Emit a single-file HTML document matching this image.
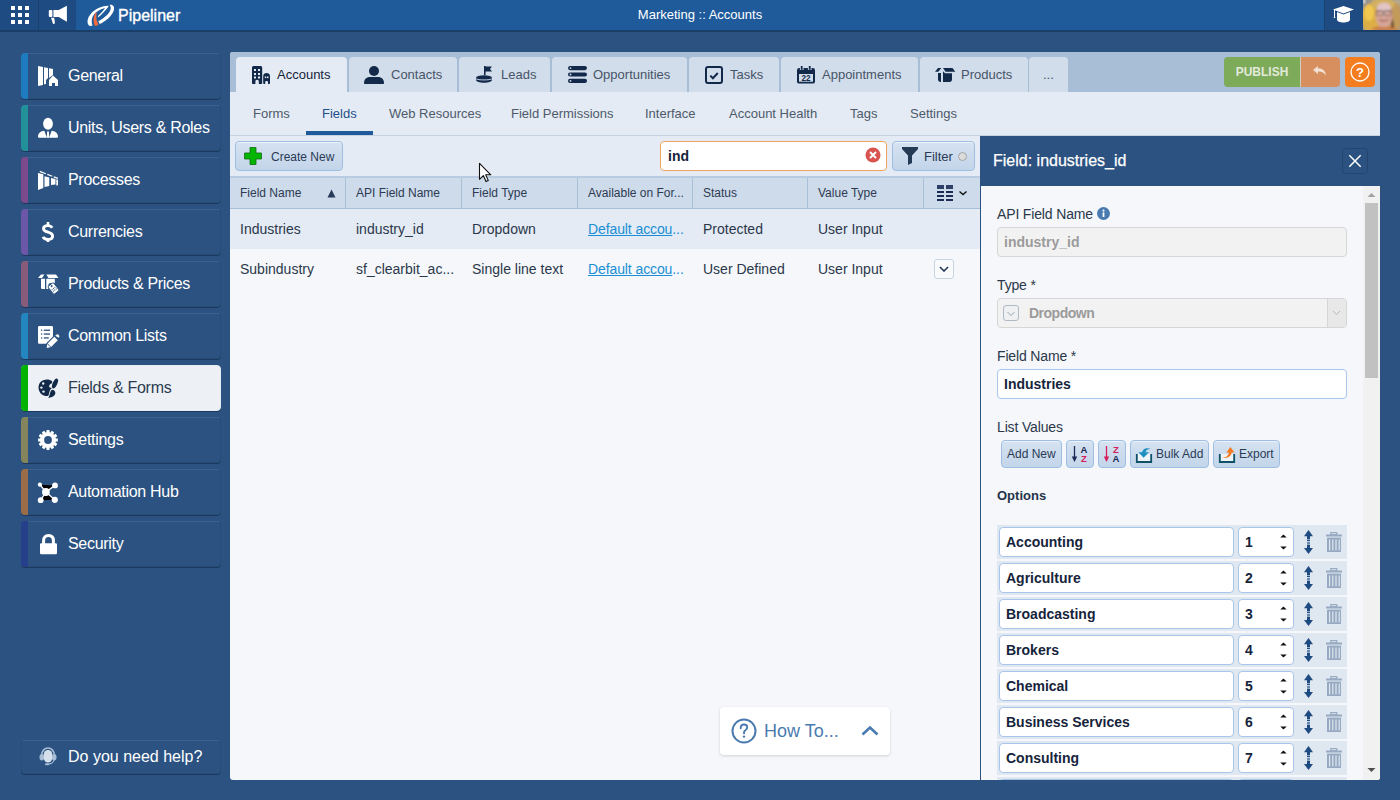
<!DOCTYPE html>
<html><head><meta charset="utf-8"><title>Pipeliner</title>
<style>
*{box-sizing:border-box;margin:0;padding:0}
html,body{width:1400px;height:800px;overflow:hidden;background:#2b5281;font-family:"Liberation Sans",sans-serif;position:relative}
.abs{position:absolute}
.si{position:absolute;left:21px;width:200px;height:46px;background:#2b5281;border-radius:4px;border:1px solid #2a4d78;border-top-color:#3a6190;box-shadow:0 1px 0 #1b395e}
.si .st{position:absolute;left:-1px;top:-1px;bottom:-1px;width:7px;border-radius:4px 0 0 4px}
.si .tx{position:absolute;left:46px;top:0;line-height:44px;color:#fff;font-size:16px;letter-spacing:-0.3px;white-space:nowrap}
.si .ic{position:absolute;left:16px;top:12px;width:20px;height:20px;overflow:visible}
.si.act{background:#edf1f6;border-color:#e6ebf2;box-shadow:0 1px 0 #1b395e}
.si.act .tx{color:#2c3b50}
.btn{position:absolute;background:linear-gradient(#d5e2f1,#c3d5ea);border:1px solid #9dbde2;border-radius:4px;box-shadow:inset 0 1px 0 #eef4fb}
.t13{font-size:13px}
</style></head>
<body>
<div class="abs" style="left:0px;top:0px;width:1400px;height:30px;background:#1f5a9b"></div>
<div class="abs" style="left:0px;top:0px;width:38px;height:30px;background:#1e4b81"></div>
<div class="abs" style="left:38px;top:0px;width:38px;height:30px;background:#1e4b81;border-left:1px solid #1a416f"></div>
<div class="abs" style="left:0px;top:30px;width:1400px;height:2px;background:#1b3e69"></div>
<div class="abs" style="left:0px;top:0px;white-space:nowrap;width:1400px;text-align:center;line-height:29px;font-size:13px;color:#fff">Marketing :: Accounts</div>
<svg class="abs" style="left:10px;top:6px" width="19" height="19" viewBox="0 0 19 19"><g fill="#fff"><rect x="1" y="0" width="4" height="4"/><rect x="8" y="0" width="4" height="4"/><rect x="15" y="0" width="4" height="4"/><rect x="1" y="7" width="4" height="4"/><rect x="8" y="7" width="4" height="4"/><rect x="15" y="7" width="4" height="4"/><rect x="1" y="14" width="4" height="4"/><rect x="8" y="14" width="4" height="4"/><rect x="15" y="14" width="4" height="4"/></g></svg>
<svg class="abs" style="left:48px;top:5px" width="20" height="20" viewBox="0 0 20 20"><rect x="0.8" y="5.1" width="3.6" height="6.8" rx="1" fill="#fff"/><path d="M5.4 5.1 H10.7 L18.9 0.8 V16.7 L10.7 11.9 H5.4Z" fill="#fff"/><path d="M3 12.8 H6.3 L6.9 17.8 C6.9 19 5.4 19.4 4.9 18.4Z" fill="#fff"/></svg>
<svg class="abs" style="left:84px;top:2px" width="34" height="26" viewBox="0 0 34 26"><path d="M5.5 23.8 C2.5 22 2.8 16 7.5 11 C11.5 7 17 4.3 23.5 3.8 C24.5 3.8 24.8 4.5 24 5.2 C21 9 17.5 12.8 14.3 15.2 L13.8 14.3 C16.5 11.8 19 9 21 6 C16.5 7 12.5 9.5 10 12.5 C7.5 15.5 7 19.5 8.5 23.5 C7.5 24 6.5 24.2 5.5 23.8Z" fill="#fff"/><path d="M25.5 2.8 C29 2.2 31 4.5 29.8 8.5 C28 14 21.5 19.5 15.8 22 L14.3 19.3 C19.5 16.5 24.5 12.5 26.2 8.5 C27.2 6 26.8 4.2 25.5 2.8Z" fill="#fff"/><path d="M12 10.3 C9.5 14 8.8 19.5 10.8 23.8 C12.2 23.8 13.5 23.3 14.6 22.5 C12.5 19.5 11.8 15 12.6 10.5Z" fill="#f26b3a"/></svg>
<div class="abs" style="left:118px;top:1px;white-space:nowrap;line-height:30px;font-size:16px;color:#fff;-webkit-text-stroke:0.35px #fff">Pipeliner</div>
<div class="abs" style="left:1324px;top:0px;width:39px;height:30px;background:#1e4b81;border-left:1px solid #1a416f"></div>
<svg class="abs" style="left:1333px;top:6px" width="22" height="17" viewBox="0 0 22 17"><path d="M0 3.5 L10.5 0 L21 3.5 L10.5 7.5Z" fill="#fff"/><path d="M4 6 V13.5 C4 15.5 7 16.5 10.5 16.5 C14 16.5 17 15.5 17 13.5 V6 L10.5 8.5Z" fill="#fff"/><path d="M1.5 4 V11" stroke="#fff" stroke-width="1"/><path d="M0.5 11 H2.5 L2 12 H1Z" fill="#fff"/></svg>
<svg class="abs" style="left:1363px;top:0px" width="37" height="30" viewBox="0 0 37 30"><defs><filter id="bl" x="-10%" y="-10%" width="120%" height="120%"><feGaussianBlur stdDeviation="1.1"/></filter><clipPath id="cp"><rect width="37" height="30"/></clipPath></defs><g clip-path="url(#cp)"><rect width="37" height="30" fill="#a59a8a"/><g filter="url(#bl)"><rect x="0" y="0" width="8" height="12" fill="#8f9092"/><rect x="0" y="0" width="2" height="3" fill="#f0f0f0"/><rect x="30" y="0" width="7" height="10" fill="#b8ab90"/><ellipse cx="8" cy="18" rx="9.5" ry="15" fill="#dcae45"/><ellipse cx="6" cy="13" rx="5" ry="8" fill="#f0c850"/><ellipse cx="31" cy="17" rx="8" ry="15" fill="#c29a5a"/><ellipse cx="20" cy="4" rx="12" ry="6" fill="#d2b060"/><path d="M26 14 C29 18 29 25 27 30 H31 C31 24 30 17 27 13Z" fill="#5a4232"/><ellipse cx="21" cy="15.5" rx="8.5" ry="12.5" fill="#d6a597"/><ellipse cx="21" cy="8" rx="7" ry="5.5" fill="#e2c4c4"/><path d="M13 11.2 H29" stroke="#6a5550" stroke-width="0.9"/><rect x="13" y="11" width="7" height="4.5" rx="1.5" fill="none" stroke="#6a5550" stroke-width="0.8"/><rect x="21.5" y="11" width="7" height="4.5" rx="1.5" fill="none" stroke="#6a5550" stroke-width="0.8"/><path d="M16.5 19.8 C19 21 23 21 25.5 19.5" stroke="#9a5a52" stroke-width="1.4" fill="none"/><path d="M8 30 C10 27 14 26.5 17 27 H26 C30 27 33 28 35 30Z" fill="#cf7a42"/></g></g></svg>
<div class="si" style="top:53px"><div class="st" style="background:#1f7bc0"></div><svg class="ic" viewBox="0 0 20 20"><path d="M0 0 L5 1 V19 L0 20Z M6 1.2 L10 2 V12 L8 14 V18 L6 18.3Z M11 2.2 L15 3 V9 L11 12Z" fill="#fff"/><path d="M15 9.5 L20 14 V20 H17 V17 H14 V20 H11 V14Z" fill="#fff"/></svg><div class="tx">General</div></div>
<div class="si" style="top:105px"><div class="st" style="background:#23919a"></div><svg class="ic" viewBox="0 0 20 20"><ellipse cx="10" cy="5.8" rx="4.9" ry="6" fill="#fff"/><path d="M0 18.8 C0 15 3 13.2 6.3 12.8 L9 19.8 H1.5 C0.6 19.8 0 19.5 0 18.8Z M20 18.8 C20 15 17 13.2 13.7 12.8 L11 19.8 H18.5 C19.4 19.8 20 19.5 20 18.8Z" fill="#fff"/><path d="M9.1 13.5 H10.9 L11.2 19.8 H8.8Z" fill="#fff"/></svg><div class="tx">Units, Users &amp; Roles</div></div>
<div class="si" style="top:157px"><div class="st" style="background:#7a4a8c"></div><svg class="ic" viewBox="0 0 20 20"><path d="M0 3 L5.3 4.2 V18 L0 20Z M6.5 6.2 L11.3 7.5 V16 L6.5 17Z M13 8 L17.5 9 V14.5 L13 15Z M18.3 9.3 L20 9.8 V15.2 L18.3 15.5Z M2 0.8 L8 3.2 L7.6 4.3 L1.6 1.9Z M9.5 3.8 L14.5 5.7 L14.1 6.8 L9.1 4.9Z M16 6.3 L20 7.8 L19.6 8.9 L15.6 7.4Z" fill="#fff"/></svg><div class="tx">Processes</div></div>
<div class="si" style="top:209px"><div class="st" style="background:#6b56a8"></div><svg class="ic" viewBox="0 0 20 20"><path d="M14.2 5.8 C13.3 4.3 11.8 3.6 9.7 3.6 C7.2 3.6 5.5 4.9 5.5 6.8 C5.5 8.8 7.5 9.5 10 10.2 C12.6 10.9 14.6 11.8 14.6 14.2 C14.6 16.3 12.6 17.4 10 17.4 C7.6 17.4 5.8 16.4 5 14.8" stroke="#fff" stroke-width="2.9" fill="none"/><rect x="8.7" y="0" width="2.6" height="3.5" fill="#fff"/><rect x="8.7" y="16.5" width="2.6" height="3.5" fill="#fff"/></svg><div class="tx">Currencies</div></div>
<div class="si" style="top:261px"><div class="st" style="background:#895b7b"></div><svg class="ic" viewBox="0 0 20 20"><path d="M0 4 L3 0.5 H6.5 L4 4Z M8.3 0.5 H18 L20.5 4 H10.5Z M3 4.8 H7 V15 H4.5 C3.5 15 3 14.5 3 13.5Z M8.3 4.8 H16.8 V9 H12.5 C11.2 9 10.3 10 10.3 11.3 V15 H8.3Z" fill="#fff"/><g transform="rotate(-38 15.5 14.5)"><rect x="12" y="9.5" width="7" height="10" rx="1.3" fill="#fff" stroke="#2b5281" stroke-width="0.9"/><circle cx="15.5" cy="11.5" r="1" fill="#2b5281"/><g fill="#2b5281"><rect x="13.2" y="14" width="1" height="1"/><rect x="15" y="14" width="1" height="1"/><rect x="16.8" y="14" width="1" height="1"/><rect x="13.2" y="16" width="1" height="1"/><rect x="15" y="16" width="1" height="1"/><rect x="16.8" y="16" width="1" height="1"/></g></g></svg><div class="tx">Products &amp; Prices</div></div>
<div class="si" style="top:313px"><div class="st" style="background:#2486bf"></div><svg class="ic" viewBox="0 0 20 20"><path d="M0 1.5 C0 0.5 0.5 0 1.5 0 H13.5 C14.5 0 15 0.5 15 1.5 V10.5 L8.5 17 L8.2 17.8 H1.5 C0.5 17.8 0 17.3 0 16.3Z" fill="#fff"/><g fill="#2b5281"><rect x="3" y="3.6" width="1.2" height="1.3"/><rect x="5.8" y="3.6" width="6.2" height="1.3"/><rect x="3" y="7.4" width="1.2" height="1.3"/><rect x="5.8" y="7.4" width="6.2" height="1.3"/><rect x="3" y="11.3" width="1.2" height="1.3"/><rect x="5.8" y="11.3" width="5" height="1.3"/></g><path d="M9.6 17.4 L16.3 10.7 L19.8 14.2 L13.1 20.9Z" fill="#fff"/><path d="M17.2 9.8 L18.1 8.9 C18.9 8.1 20 8.1 20.8 8.9 C21.6 9.7 21.6 10.8 20.8 11.6 L20.7 11.7Z" fill="#fff"/><path d="M9.2 18 L12.5 21.3 L8.7 21.9Z" fill="#fff"/></svg><div class="tx">Common Lists</div></div>
<div class="si act" style="top:365px"><div class="st" style="background:#00b300"></div><svg class="ic" viewBox="0 0 20 20"><path d="M14 3 C11 0.5 5 0.8 2 4.5 C-0.5 8 0.3 14 4 16.5 C6 18 8.5 18.5 10.5 17.5 L11.5 13.5 C12 12 12.8 11 14 10 L11.8 9.5 C10.5 8.5 11.2 6 14.3 5.3Z" fill="#13294a"/><circle cx="5.2" cy="5.5" r="1.2" fill="#edf1f6"/><circle cx="3.4" cy="9.6" r="1.2" fill="#edf1f6"/><circle cx="5.5" cy="13.6" r="1.2" fill="#edf1f6"/><ellipse cx="17" cy="5.5" rx="2.2" ry="5.3" transform="rotate(25 17 5.5)" fill="#13294a"/><path d="M14.5 11.8 C16.8 12.2 18 14.5 17 16.5 C15.8 18.8 12.5 19.5 10.2 20 C11.5 18 11.8 15.8 12.3 14.3 C12.8 12.8 13.5 12 14.5 11.8Z" fill="#13294a"/></svg><div class="tx">Fields &amp; Forms</div></div>
<div class="si" style="top:417px"><div class="st" style="background:#85855d"></div><svg class="ic" viewBox="0 0 20 20"><path d="M17.85 8.47 L19.89 8.52 L19.89 11.48 L17.85 11.53 L17.56 12.60 L19.30 13.67 L17.83 16.23 L16.04 15.25 L15.25 16.04 L16.23 17.83 L13.67 19.30 L12.60 17.56 L11.53 17.85 L11.48 19.89 L8.52 19.89 L8.47 17.85 L7.40 17.56 L6.33 19.30 L3.77 17.83 L4.75 16.04 L3.96 15.25 L2.17 16.23 L0.70 13.67 L2.44 12.60 L2.15 11.53 L0.11 11.48 L0.11 8.52 L2.15 8.47 L2.44 7.40 L0.70 6.33 L2.17 3.77 L3.96 4.75 L4.75 3.96 L3.77 2.17 L6.33 0.70 L7.40 2.44 L8.47 2.15 L8.52 0.11 L11.48 0.11 L11.53 2.15 L12.60 2.44 L13.67 0.70 L16.23 2.17 L15.25 3.96 L16.04 4.75 L17.83 3.77 L19.30 6.33 L17.56 7.40Z" fill="#fff"/><circle cx="10" cy="10" r="3.9" fill="#2b5281"/></svg><div class="tx">Settings</div></div>
<div class="si" style="top:469px"><div class="st" style="background:#9a6c48"></div><svg class="ic" viewBox="0 0 20 20"><g stroke="#fff" stroke-width="1.3"><path d="M1.9 2.7 L7.9 10 L17 3.4 M2.7 18.2 L7.9 10 L16.8 17.8"/></g><circle cx="7.9" cy="10" r="3.9" fill="#fff"/><circle cx="1.9" cy="2.7" r="2.1" fill="#fff"/><circle cx="17" cy="3.4" r="2.9" fill="#fff"/><circle cx="2.7" cy="18.2" r="2.9" fill="#fff"/><circle cx="16.8" cy="17.8" r="3.1" fill="#fff"/></svg><div class="tx">Automation Hub</div></div>
<div class="si" style="top:521px"><div class="st" style="background:#263f8a"></div><svg class="ic" viewBox="0 0 20 20"><path d="M5.6 10 V6.5 C5.6 3.2 7.6 1.5 10.5 1.5 C13.4 1.5 15.4 3.2 15.4 6.5 V10" stroke="#fff" stroke-width="3" fill="none"/><rect x="2" y="9.3" width="17" height="11" rx="1.2" fill="#fff"/></svg><div class="tx">Security</div></div>
<div class="si" style="top:740px;height:34px"><svg class="ic" style="top:5px" viewBox="0 0 20 20"><path d="M3.5 10 C3.5 5 6.5 2 10 2 C13.5 2 16.5 5 16.5 10" stroke="#a9bdd6" stroke-width="1.6" fill="none"/><ellipse cx="3.8" cy="11.3" rx="2.3" ry="3.3" fill="#a9bdd6"/><ellipse cx="16.2" cy="11.3" rx="2.3" ry="3.3" fill="#a9bdd6"/><rect x="5.8" y="4" width="8.4" height="12.5" rx="4.2" fill="#d6e0ec"/><path d="M16 14 C15.5 16.5 13 18 9.5 18.3" stroke="#a9bdd6" stroke-width="1.2" fill="none"/><rect x="7" y="17.3" width="4" height="2" rx="1" fill="#a9bdd6"/></svg><div class="tx" style="line-height:32px;letter-spacing:0">Do you need help?</div></div>
<div class="abs" style="left:230px;top:52px;width:1150px;height:728px;background:#f5f7fa;border-radius:3px"></div>
<div class="abs" style="left:230px;top:52px;width:1150px;height:40px;background:#a8bed7;border-radius:3px 3px 0 0"></div>
<div class="abs" style="left:236px;top:57px;width:111px;height:35px;background:#e4ebf4;border-radius:4px 4px 0 0"></div>
<svg class="abs" style="left:252px;top:66px" width="19" height="18" viewBox="0 0 19 18"><path d="M0 1.8 C0 0.6 0.6 0 1.8 0 H8.4 C9.6 0 10.2 0.6 10.2 1.8 V17 C10.2 17.6 9.8 18 9.2 18 H6.8 V15.5 C6.8 14.5 6.2 13.8 5.1 13.8 C4 13.8 3.4 14.5 3.4 15.5 V18 H1 C0.4 18 0 17.6 0 17Z" fill="#13294a"/><g fill="#e4ebf4"><rect x="2" y="3" width="2" height="2"/><rect x="6" y="3" width="2" height="2"/><rect x="2" y="7" width="2" height="2"/><rect x="6" y="7" width="2" height="2"/><rect x="2" y="10.5" width="2" height="2"/><rect x="6" y="10.5" width="2" height="2"/></g><path d="M11.2 10 C11.2 8 12.8 7 14.6 7 C16.4 7 18 8 18 10 V17.2 C18 17.7 17.7 18 17.2 18 H16 V16.3 C16 15.5 15.4 15 14.6 15 C13.8 15 13.2 15.5 13.2 16.3 V18 H12 C11.5 18 11.2 17.7 11.2 17.2Z" fill="#13294a"/><rect x="12.8" y="10.5" width="1.5" height="1.6" fill="#e4ebf4"/><rect x="15" y="10.5" width="1.5" height="1.6" fill="#e4ebf4"/></svg>
<div class="abs" style="left:277px;top:57px;white-space:nowrap;line-height:35px;font-size:13px;color:#16243b">Accounts</div>
<div class="abs" style="left:349px;top:57px;width:108px;height:35px;background:#d1ddeb;border-radius:4px 4px 0 0"></div>
<svg class="abs" style="left:364px;top:66px" width="20" height="18" viewBox="0 0 20 18"><circle cx="10" cy="5" r="5" fill="#13294a"/><path d="M0 17 C0 12.5 3.5 11 6 11 H14 C16.5 11 20 12.5 20 17 C20 17.6 19.6 18 19 18 H1 C0.4 18 0 17.6 0 17Z" fill="#13294a"/></svg>
<div class="abs" style="left:391px;top:57px;white-space:nowrap;line-height:35px;font-size:13px;color:#485467">Contacts</div>
<div class="abs" style="left:459px;top:57px;width:91px;height:35px;background:#d1ddeb;border-radius:4px 4px 0 0"></div>
<svg class="abs" style="left:476px;top:66px" width="17" height="17" viewBox="0 0 17 17"><path d="M8 0 L8.8 0 V9" stroke="#13294a" stroke-width="1.6"/><path d="M8.5 0.5 H16 L14 3 L16 5.5 H8.5Z" fill="#13294a"/><ellipse cx="8" cy="12" rx="8" ry="2.7" fill="#13294a"/><path d="M0 12 V14 C0 15.5 3.5 16.7 8 16.7 C12.5 16.7 16 15.5 16 14 V12" fill="#13294a"/><path d="M0 12.8 C2 14.3 14 14.3 16 12.8" stroke="#d1ddeb" stroke-width="0.9" fill="none"/></svg>
<div class="abs" style="left:501px;top:57px;white-space:nowrap;line-height:35px;font-size:13px;color:#485467">Leads</div>
<div class="abs" style="left:552px;top:57px;width:135px;height:35px;background:#d1ddeb;border-radius:4px 4px 0 0"></div>
<svg class="abs" style="left:568px;top:66px" width="19" height="17" viewBox="0 0 19 17"><rect x="0" y="0" width="19" height="4.2" rx="2.1" fill="#13294a"/><rect x="0" y="6.4" width="19" height="4.2" rx="2.1" fill="#13294a"/><rect x="0" y="12.8" width="19" height="4.2" rx="2.1" fill="#13294a"/><circle cx="2.5" cy="2.1" r="0.9" fill="#d1ddeb"/><circle cx="2.5" cy="8.5" r="0.9" fill="#d1ddeb"/><circle cx="2.5" cy="14.9" r="0.9" fill="#d1ddeb"/></svg>
<div class="abs" style="left:593px;top:57px;white-space:nowrap;line-height:35px;font-size:13px;color:#485467">Opportunities</div>
<div class="abs" style="left:689px;top:57px;width:90px;height:35px;background:#d1ddeb;border-radius:4px 4px 0 0"></div>
<svg class="abs" style="left:705px;top:66px" width="18" height="18" viewBox="0 0 18 18"><rect x="1" y="1" width="16" height="16" rx="2" fill="none" stroke="#13294a" stroke-width="2"/><path d="M5.3 9.6 L7.9 12.2 L12.8 7" fill="none" stroke="#13294a" stroke-width="2"/></svg>
<div class="abs" style="left:730px;top:57px;white-space:nowrap;line-height:35px;font-size:13px;color:#485467">Tasks</div>
<div class="abs" style="left:781px;top:57px;width:137px;height:35px;background:#d1ddeb;border-radius:4px 4px 0 0"></div>
<svg class="abs" style="left:797px;top:66px" width="18" height="18" viewBox="0 0 18 18"><rect x="0" y="2" width="18" height="15.6" rx="2.2" fill="#13294a"/><rect x="2" y="8" width="14" height="7.7" fill="#d1ddeb"/><rect x="2.9" y="0" width="3.6" height="4" fill="#d1ddeb"/><rect x="10.9" y="0" width="3.6" height="4" fill="#d1ddeb"/><rect x="3.8" y="0" width="1.8" height="3.8" fill="#13294a"/><rect x="11.8" y="0" width="1.8" height="3.8" fill="#13294a"/><text x="9" y="14.9" text-anchor="middle" font-family="Liberation Sans" font-weight="bold" font-size="8.2" fill="#13294a">22</text></svg>
<div class="abs" style="left:822px;top:57px;white-space:nowrap;line-height:35px;font-size:13px;color:#485467">Appointments</div>
<div class="abs" style="left:920px;top:57px;width:108px;height:35px;background:#d1ddeb;border-radius:4px 4px 0 0"></div>
<svg class="abs" style="left:935px;top:66px" width="21" height="18" viewBox="0 0 21 18"><g transform="translate(0,2)"><path d="M0 3.7 L3 0 H6.3 L3.3 3.7Z M8 0 H17.5 L20.3 3.7 H10.6Z M3 5 H6 V14 H5.8 C4.2 14 3 13 3 11.5Z M8 3.2 L10 5.2 H17 V11.6 C17 13 16 14 14.6 14 H8Z" fill="#13294a"/></g></svg>
<div class="abs" style="left:961px;top:57px;white-space:nowrap;line-height:35px;font-size:13px;color:#485467">Products</div>
<div class="abs" style="left:1029px;top:57px;width:39px;height:35px;background:#d1ddeb;border-radius:4px 4px 0 0"></div>
<div class="abs" style="left:1043px;top:57px;white-space:nowrap;line-height:35px;font-size:13px;color:#485467">...</div>
<div class="abs" style="left:1224px;top:57px;width:76px;height:30px;background:#7eab5a;border-radius:4px 0 0 4px"></div>
<div class="abs" style="left:1224px;top:57px;white-space:nowrap;width:76px;text-align:center;line-height:30px;font-size:12px;font-weight:bold;color:#e1e9da">PUBLISH</div>
<div class="abs" style="left:1300px;top:57px;width:40px;height:30px;background:#d88f60;border-left:1px solid #c9d3c0;border-radius:0 4px 4px 0"></div>
<svg class="abs" style="left:1313px;top:65px" width="14" height="12" viewBox="0 0 14 12"><path d="M5 1 L0 5 L5 9 V6.5 C8.5 6.3 11 7.5 13 10.5 C12.5 6 10 3.5 5 3.3Z" fill="#f2e0d2"/></svg>
<div class="abs" style="left:1345px;top:57px;width:30px;height:30px;background:#f47d20;border-radius:4px"></div>
<svg class="abs" style="left:1350px;top:62px" width="20" height="20" viewBox="0 0 20 20"><circle cx="10" cy="10" r="9" fill="none" stroke="#fff" stroke-width="1.3"/><text x="10" y="14.6" text-anchor="middle" font-family="Liberation Sans" font-weight="bold" font-size="13" fill="#fff">?</text></svg>
<div class="abs" style="left:230px;top:92px;width:1150px;height:44px;background:#e4ebf4;border-bottom:1px solid #c5d2e1"></div>
<div class="abs" style="left:253px;top:92px;white-space:nowrap;line-height:43px;font-size:13px;color:#4e5a6b">Forms</div>
<div class="abs" style="left:322px;top:92px;white-space:nowrap;line-height:43px;font-size:13px;color:#1f4f8a">Fields</div>
<div class="abs" style="left:389px;top:92px;white-space:nowrap;line-height:43px;font-size:13px;color:#4e5a6b">Web Resources</div>
<div class="abs" style="left:511px;top:92px;white-space:nowrap;line-height:43px;font-size:13px;color:#4e5a6b">Field Permissions</div>
<div class="abs" style="left:645px;top:92px;white-space:nowrap;line-height:43px;font-size:13px;color:#4e5a6b">Interface</div>
<div class="abs" style="left:729px;top:92px;white-space:nowrap;line-height:43px;font-size:13px;color:#4e5a6b">Account Health</div>
<div class="abs" style="left:850px;top:92px;white-space:nowrap;line-height:43px;font-size:13px;color:#4e5a6b">Tags</div>
<div class="abs" style="left:910px;top:92px;white-space:nowrap;line-height:43px;font-size:13px;color:#4e5a6b">Settings</div>
<div class="abs" style="left:306px;top:131px;width:67px;height:4px;background:#1f5a9b"></div>
<div class="abs" style="left:230px;top:136px;width:750px;height:40px;background:#e4ebf4"></div>
<div class="btn" style="left:235px;top:141px;width:108px;height:30px"></div>
<svg class="abs" style="left:244px;top:147px" width="18" height="18" viewBox="0 0 18 18"><path d="M6 0.5 H12 V6 H17.5 V12 H12 V17.5 H6 V12 H0.5 V6 H6Z" fill="#04b504" stroke="#116b11" stroke-width="0.8"/></svg>
<div class="abs" style="left:271px;top:142px;white-space:nowrap;line-height:31px;font-size:12px;color:#2a3a55">Create New</div>
<div class="abs" style="left:660px;top:141px;width:227px;height:30px;background:#fff;border:1px solid #f2a45e;border-radius:4px"></div>
<div class="abs" style="left:668px;top:141px;white-space:nowrap;line-height:30px;font-size:14px;font-weight:bold;color:#16243b">ind</div>
<svg class="abs" style="left:865px;top:147px" width="16" height="16" viewBox="0 0 16 16"><circle cx="8" cy="8" r="7.5" fill="#d9534f"/><path d="M5 5 L11 11 M11 5 L5 11" stroke="#fff" stroke-width="2"/></svg>
<div class="btn" style="left:892px;top:141px;width:83px;height:30px"></div>
<svg class="abs" style="left:902px;top:147px" width="16" height="18" viewBox="0 0 16 18"><path d="M0 0 H16 V2 L10 8.5 V16 L6 18 V8.5 L0 2Z" fill="#243a55"/></svg>
<div class="abs" style="left:924px;top:141px;white-space:nowrap;line-height:31px;font-size:13px;color:#2a3a55">Filter</div>
<div class="abs" style="left:958px;top:152px;width:9px;height:9px;border-radius:50%;background:#dcdcdc;border:1px solid #a5a5a5"></div>
<div class="abs" style="left:230px;top:176px;width:750px;height:33px;background:#cddbeb;border-top:2px solid #b9cbe0;border-bottom:1px solid #a9bfd8"></div>
<div class="abs" style="left:345px;top:178px;width:1px;height:30px;background:#a9bfd8"></div>
<div class="abs" style="left:240px;top:178px;white-space:nowrap;line-height:31px;font-size:12px;color:#2e3a52">Field Name</div>
<div class="abs" style="left:461px;top:178px;width:1px;height:30px;background:#a9bfd8"></div>
<div class="abs" style="left:356px;top:178px;white-space:nowrap;line-height:31px;font-size:12px;color:#2e3a52">API Field Name</div>
<div class="abs" style="left:577px;top:178px;width:1px;height:30px;background:#a9bfd8"></div>
<div class="abs" style="left:472px;top:178px;white-space:nowrap;line-height:31px;font-size:12px;color:#2e3a52">Field Type</div>
<div class="abs" style="left:692px;top:178px;width:1px;height:30px;background:#a9bfd8"></div>
<div class="abs" style="left:588px;top:178px;white-space:nowrap;line-height:31px;font-size:12px;color:#2e3a52">Available on For...</div>
<div class="abs" style="left:807px;top:178px;width:1px;height:30px;background:#a9bfd8"></div>
<div class="abs" style="left:703px;top:178px;white-space:nowrap;line-height:31px;font-size:12px;color:#2e3a52">Status</div>
<div class="abs" style="left:923px;top:178px;width:1px;height:30px;background:#a9bfd8"></div>
<div class="abs" style="left:818px;top:178px;white-space:nowrap;line-height:31px;font-size:12px;color:#2e3a52">Value Type</div>
<svg class="abs" style="left:327px;top:189px" width="9" height="9" viewBox="0 0 9 9"><path d="M4.5 0.5 L8.5 8.5 H0.5Z" fill="#273a5a"/></svg>
<svg class="abs" style="left:937px;top:185px" width="31" height="17" viewBox="0 0 31 17"><g fill="#1c2c55"><rect x="0" y="0" width="7" height="4" fill="#2f4068"/><rect x="9" y="0" width="7" height="4" fill="#2f4068"/><rect x="0" y="6" width="7" height="2"/><rect x="9" y="6" width="7" height="2"/><rect x="0" y="10" width="7" height="2"/><rect x="9" y="10" width="7" height="2"/><rect x="0" y="14" width="7" height="2"/><rect x="9" y="14" width="7" height="2"/></g><path d="M22.5 6.5 L26 9.5 L29.5 6.5" stroke="#111" stroke-width="1.4" fill="none"/></svg>
<div class="abs" style="left:230px;top:209px;width:750px;height:40px;background:#e4ebf4"></div>
<div class="abs" style="left:240px;top:209px;white-space:nowrap;line-height:41px;font-size:14px;color:#2b374b">Industries</div>
<div class="abs" style="left:356px;top:209px;white-space:nowrap;line-height:41px;font-size:14px;color:#2b374b">industry_id</div>
<div class="abs" style="left:472px;top:209px;white-space:nowrap;line-height:41px;font-size:14px;color:#2b374b">Dropdown</div>
<div class="abs" style="left:588px;top:209px;white-space:nowrap;line-height:41px;font-size:14px;color:#1a8fd6;letter-spacing:-0.1px"><span style="text-decoration:underline">Default accou</span>...</div>
<div class="abs" style="left:703px;top:209px;white-space:nowrap;line-height:41px;font-size:14px;color:#2b374b">Protected</div>
<div class="abs" style="left:818px;top:209px;white-space:nowrap;line-height:41px;font-size:14px;color:#2b374b">User Input</div>
<div class="abs" style="left:240px;top:249px;white-space:nowrap;line-height:41px;font-size:14px;color:#2b374b">Subindustry</div>
<div class="abs" style="left:356px;top:249px;white-space:nowrap;line-height:41px;font-size:14px;color:#2b374b">sf_clearbit_ac...</div>
<div class="abs" style="left:472px;top:249px;white-space:nowrap;line-height:41px;font-size:14px;color:#2b374b">Single line text</div>
<div class="abs" style="left:588px;top:249px;white-space:nowrap;line-height:41px;font-size:14px;color:#1a8fd6;letter-spacing:-0.1px"><span style="text-decoration:underline">Default accou</span>...</div>
<div class="abs" style="left:703px;top:249px;white-space:nowrap;line-height:41px;font-size:14px;color:#2b374b">User Defined</div>
<div class="abs" style="left:818px;top:249px;white-space:nowrap;line-height:41px;font-size:14px;color:#2b374b">User Input</div>
<div class="abs" style="left:934px;top:259px;width:20px;height:20px;background:#f8fafc;border:1px solid #c9d5e3;border-radius:3px"></div>
<svg class="abs" style="left:939px;top:266px" width="10" height="6" viewBox="0 0 10 6"><path d="M1 1 L5 5 L9 1" stroke="#22375a" stroke-width="1.6" fill="none"/></svg>
<div class="abs" style="left:720px;top:707px;width:170px;height:48px;background:#fff;border-radius:4px;box-shadow:0 1px 3px rgba(0,0,0,0.15)"></div>
<svg class="abs" style="left:731px;top:718px" width="26" height="26" viewBox="0 0 26 26"><circle cx="13" cy="13" r="11.5" fill="none" stroke="#4a7bb0" stroke-width="2"/><path d="M9.7 10.2 C9.7 7.7 11.2 6.5 13 6.5 C14.9 6.5 16.2 7.8 16.2 9.4 C16.2 11.2 14.6 11.9 13.7 12.9 C13.2 13.5 13 14.2 13 15.4" stroke="#4a7bb0" stroke-width="1.9" fill="none" stroke-linecap="round"/><circle cx="13" cy="18.6" r="1.2" fill="#4a7bb0"/></svg>
<div class="abs" style="left:764px;top:707px;white-space:nowrap;line-height:48px;font-size:18px;color:#4a7bb0">How To...</div>
<svg class="abs" style="left:861px;top:725px" width="18" height="11" viewBox="0 0 18 11"><path d="M1.5 9.5 L9 2.5 L16.5 9.5" stroke="#4a7bb0" stroke-width="2.6" fill="none"/></svg>
<div class="abs" style="left:980px;top:136px;width:400px;height:644px;background:#f5f7fa;border-left:1px solid #2b5281;border-radius:0 0 3px 0"></div>
<div class="abs" style="left:980px;top:136px;width:400px;height:50px;background:#2b5281"></div>
<div class="abs" style="left:993px;top:136px;white-space:nowrap;line-height:50px;font-size:16px;color:#fff;-webkit-text-stroke:0.25px #fff">Field: industries_id</div>
<div class="abs" style="left:1342px;top:148px;width:26px;height:26px;border:1px solid #23466f;border-radius:4px"></div>
<svg class="abs" style="left:1348px;top:154px" width="14" height="14" viewBox="0 0 14 14"><path d="M1.3 1.3 L12.7 12.7 M12.7 1.3 L1.3 12.7" stroke="#fff" stroke-width="1.5"/></svg>
<div class="abs" style="left:1363px;top:186px;width:17px;height:594px;background:#f1f1f1;border-radius:0 0 3px 0"></div>
<svg class="abs" style="left:1367px;top:192px" width="9" height="6" viewBox="0 0 9 6"><path d="M0.5 5 L4.5 1 L8.5 5Z" fill="#a3a3a3"/></svg>
<div class="abs" style="left:1365px;top:203px;width:13px;height:175px;background:#c1c1c1"></div>
<svg class="abs" style="left:1367px;top:767px" width="9" height="6" viewBox="0 0 9 6"><path d="M0.5 1 L4.5 5 L8.5 1Z" fill="#505050"/></svg>
<div class="abs" style="left:997px;top:206px;white-space:nowrap;line-height:16px;font-size:14px;color:#2b374b;letter-spacing:-0.15px">API Field Name</div>
<svg class="abs" style="left:1097px;top:207px" width="13" height="13" viewBox="0 0 13 13"><circle cx="6.5" cy="6.5" r="6.5" fill="#4a7bb0"/><rect x="5.6" y="5.4" width="1.8" height="4.6" fill="#fff"/><circle cx="6.5" cy="3.6" r="1.05" fill="#fff"/></svg>
<div class="abs" style="left:997px;top:227px;width:350px;height:30px;background:#f2f2f2;border:1px solid #d6d6d6;border-radius:4px"></div>
<div class="abs" style="left:1004px;top:227px;white-space:nowrap;line-height:30px;font-size:14px;font-weight:bold;color:#9b9b9b">industry_id</div>
<div class="abs" style="left:997px;top:277px;white-space:nowrap;line-height:16px;font-size:14px;color:#2b374b;letter-spacing:-0.15px">Type *</div>
<div class="abs" style="left:997px;top:298px;width:350px;height:30px;background:#f2f2f2;border:1px solid #d6d6d6;border-radius:4px"></div>
<div class="abs" style="left:1327px;top:299px;width:19px;height:28px;background:#e8e8e8;border-left:1px solid #d6d6d6;border-radius:0 3px 3px 0"></div>
<svg class="abs" style="left:1332px;top:310px" width="9" height="6" viewBox="0 0 9 6"><path d="M1 1 L4.5 4.5 L8 1" stroke="#b5b5b5" stroke-width="1" fill="none"/></svg>
<div class="abs" style="left:1003px;top:305px;width:16px;height:16px;border:1px solid #b0bac6;border-radius:3px;background:#eef0f2"></div>
<svg class="abs" style="left:1006px;top:311px" width="10" height="6" viewBox="0 0 10 6"><path d="M1.5 1 L5 4.5 L8.5 1" stroke="#9aa6b4" stroke-width="1" fill="none"/></svg>
<div class="abs" style="left:1029px;top:298px;white-space:nowrap;line-height:30px;font-size:14px;font-weight:bold;color:#9b9b9b;letter-spacing:-0.5px">Dropdown</div>
<div class="abs" style="left:997px;top:348px;white-space:nowrap;line-height:16px;font-size:14px;color:#2b374b;letter-spacing:-0.15px">Field Name *</div>
<div class="abs" style="left:997px;top:369px;width:350px;height:30px;background:#fff;border:1px solid #a9c6ea;border-radius:4px"></div>
<div class="abs" style="left:1004px;top:369px;white-space:nowrap;line-height:30px;font-size:14px;font-weight:bold;color:#16243b">Industries</div>
<div class="abs" style="left:997px;top:419px;white-space:nowrap;line-height:16px;font-size:14px;color:#2b374b;letter-spacing:-0.15px">List Values</div>
<div class="btn" style="left:1001px;top:440px;width:61px;height:28px"></div>
<div class="btn" style="left:1066px;top:440px;width:28px;height:28px"></div>
<div class="btn" style="left:1098px;top:440px;width:28px;height:28px"></div>
<div class="btn" style="left:1130px;top:440px;width:79px;height:28px"></div>
<div class="btn" style="left:1213px;top:440px;width:67px;height:28px"></div>
<div class="abs" style="left:1007px;top:440px;white-space:nowrap;line-height:28px;font-size:12px;color:#2a3a55">Add New</div>
<div class="abs" style="left:1156px;top:440px;white-space:nowrap;line-height:28px;font-size:12px;color:#2a3a55">Bulk Add</div>
<div class="abs" style="left:1239px;top:440px;white-space:nowrap;line-height:28px;font-size:12px;color:#2a3a55">Export</div>
<svg class="abs" style="left:1071px;top:445px" width="19" height="18" viewBox="0 0 19 18"><path d="M3.5 1 V12.5" stroke="#1c2a55" stroke-width="1.3"/><path d="M0.8 11.5 L3.5 17 L6.2 11.5Z" fill="#1c2a55"/><text x="13" y="8.2" text-anchor="middle" font-family="Liberation Sans" font-weight="bold" font-size="9.5" fill="#1c2a55">A</text><text x="13" y="17" text-anchor="middle" font-family="Liberation Sans" font-weight="bold" font-size="9.5" fill="#d81b5a">Z</text></svg>
<svg class="abs" style="left:1103px;top:445px" width="19" height="18" viewBox="0 0 19 18"><path d="M3.5 1 V12.5" stroke="#d81b5a" stroke-width="1.3"/><path d="M0.8 11.5 L3.5 17 L6.2 11.5Z" fill="#d81b5a"/><text x="13" y="8.2" text-anchor="middle" font-family="Liberation Sans" font-weight="bold" font-size="9.5" fill="#d81b5a">Z</text><text x="13" y="17" text-anchor="middle" font-family="Liberation Sans" font-weight="bold" font-size="9.5" fill="#1c2a55">A</text></svg>
<svg class="abs" style="left:1135px;top:446px" width="18" height="17" viewBox="0 0 18 17"><rect x="2.5" y="8" width="13" height="7.5" fill="#eef3f8"/><path d="M1.8 8 V16 H16.2 V8" stroke="#0d5266" stroke-width="1.8" fill="none"/><path d="M7 6.8 C7.5 3.5 10.5 1.2 16 3 C12.5 2.8 10.5 4.5 10.5 6.8Z" fill="#1b8fc0"/><path d="M3.5 6.2 H14 L8.6 11.8Z" fill="#1b8fc0"/></svg>
<svg class="abs" style="left:1218px;top:446px" width="18" height="17" viewBox="0 0 18 17"><rect x="2.5" y="8" width="13" height="7.5" fill="#eef3f8"/><path d="M1.8 8 V16 H16.2 V8" stroke="#0d5266" stroke-width="1.8" fill="none"/><path d="M3.5 11.5 C7.5 12 10.5 10 11 6 H13.8 C13.3 10.5 9.5 13 3.5 11.5Z" fill="#f47920"/><path d="M8.3 6.5 L12.4 1 L16.5 6.5Z" fill="#f47920"/></svg>
<div class="abs" style="left:997px;top:488px;white-space:nowrap;line-height:16px;font-size:13px;font-weight:bold;color:#263349">Options</div>
<div class="abs" style="left:997px;top:525px;width:350px;height:34px;background:#dfe7f1"></div>
<div class="abs" style="left:999px;top:527px;width:235px;height:30px;background:#fff;border:1px solid #a9c6ea;border-radius:4px"></div>
<div class="abs" style="left:1006px;top:527px;white-space:nowrap;line-height:30px;font-size:14px;font-weight:bold;color:#16243b">Accounting</div>
<div class="abs" style="left:1238px;top:527px;width:56px;height:30px;background:#fff;border:1px solid #a9c6ea;border-radius:4px"></div>
<div class="abs" style="left:1245px;top:527px;white-space:nowrap;line-height:30px;font-size:14px;font-weight:bold;color:#16243b">1</div>
<svg class="abs" style="left:1279px;top:534px" width="9" height="17" viewBox="0 0 9 17"><path d="M1.3 3.6 L4.5 0.6 L7.7 3.6Z" fill="#111"/><path d="M1.3 12.6 L4.5 15.6 L7.7 12.6Z" fill="#111"/></svg>
<svg class="abs" style="left:1304px;top:530px" width="9" height="24" viewBox="0 0 9 24"><path d="M4.5 0 L9 6.2 H0Z" fill="#1e4b81"/><rect x="3" y="6" width="3" height="3.3" fill="#1e4b81"/><rect x="3" y="9.9" width="3" height="1.2" fill="#1e4b81"/><rect x="3" y="12.4" width="3" height="1.2" fill="#1e4b81"/><rect x="3" y="14.6" width="3" height="3.6" fill="#1e4b81"/><path d="M0 18 H9 L4.5 24Z" fill="#1e4b81"/></svg>
<svg class="abs" style="left:1325px;top:532px" width="18" height="21" viewBox="0 0 18 21"><rect x="5.8" y="0.6" width="6" height="2.2" fill="none" stroke="#97aac2" stroke-width="1.2"/><rect x="1" y="2.5" width="16" height="2" fill="#97aac2"/><rect x="2" y="5.6" width="14" height="14.4" fill="#97aac2"/><g fill="#dfe7f1"><rect x="4" y="7.5" width="1.2" height="10.8"/><rect x="7.2" y="7.5" width="1.2" height="10.8"/><rect x="10.4" y="7.5" width="1.2" height="10.8"/><rect x="13.6" y="7.5" width="1.2" height="10.8"/></g></svg>
<div class="abs" style="left:997px;top:561px;width:350px;height:34px;background:#dfe7f1"></div>
<div class="abs" style="left:999px;top:563px;width:235px;height:30px;background:#fff;border:1px solid #a9c6ea;border-radius:4px"></div>
<div class="abs" style="left:1006px;top:563px;white-space:nowrap;line-height:30px;font-size:14px;font-weight:bold;color:#16243b">Agriculture</div>
<div class="abs" style="left:1238px;top:563px;width:56px;height:30px;background:#fff;border:1px solid #a9c6ea;border-radius:4px"></div>
<div class="abs" style="left:1245px;top:563px;white-space:nowrap;line-height:30px;font-size:14px;font-weight:bold;color:#16243b">2</div>
<svg class="abs" style="left:1279px;top:570px" width="9" height="17" viewBox="0 0 9 17"><path d="M1.3 3.6 L4.5 0.6 L7.7 3.6Z" fill="#111"/><path d="M1.3 12.6 L4.5 15.6 L7.7 12.6Z" fill="#111"/></svg>
<svg class="abs" style="left:1304px;top:566px" width="9" height="24" viewBox="0 0 9 24"><path d="M4.5 0 L9 6.2 H0Z" fill="#1e4b81"/><rect x="3" y="6" width="3" height="3.3" fill="#1e4b81"/><rect x="3" y="9.9" width="3" height="1.2" fill="#1e4b81"/><rect x="3" y="12.4" width="3" height="1.2" fill="#1e4b81"/><rect x="3" y="14.6" width="3" height="3.6" fill="#1e4b81"/><path d="M0 18 H9 L4.5 24Z" fill="#1e4b81"/></svg>
<svg class="abs" style="left:1325px;top:568px" width="18" height="21" viewBox="0 0 18 21"><rect x="5.8" y="0.6" width="6" height="2.2" fill="none" stroke="#97aac2" stroke-width="1.2"/><rect x="1" y="2.5" width="16" height="2" fill="#97aac2"/><rect x="2" y="5.6" width="14" height="14.4" fill="#97aac2"/><g fill="#dfe7f1"><rect x="4" y="7.5" width="1.2" height="10.8"/><rect x="7.2" y="7.5" width="1.2" height="10.8"/><rect x="10.4" y="7.5" width="1.2" height="10.8"/><rect x="13.6" y="7.5" width="1.2" height="10.8"/></g></svg>
<div class="abs" style="left:997px;top:597px;width:350px;height:34px;background:#dfe7f1"></div>
<div class="abs" style="left:999px;top:599px;width:235px;height:30px;background:#fff;border:1px solid #a9c6ea;border-radius:4px"></div>
<div class="abs" style="left:1006px;top:599px;white-space:nowrap;line-height:30px;font-size:14px;font-weight:bold;color:#16243b">Broadcasting</div>
<div class="abs" style="left:1238px;top:599px;width:56px;height:30px;background:#fff;border:1px solid #a9c6ea;border-radius:4px"></div>
<div class="abs" style="left:1245px;top:599px;white-space:nowrap;line-height:30px;font-size:14px;font-weight:bold;color:#16243b">3</div>
<svg class="abs" style="left:1279px;top:606px" width="9" height="17" viewBox="0 0 9 17"><path d="M1.3 3.6 L4.5 0.6 L7.7 3.6Z" fill="#111"/><path d="M1.3 12.6 L4.5 15.6 L7.7 12.6Z" fill="#111"/></svg>
<svg class="abs" style="left:1304px;top:602px" width="9" height="24" viewBox="0 0 9 24"><path d="M4.5 0 L9 6.2 H0Z" fill="#1e4b81"/><rect x="3" y="6" width="3" height="3.3" fill="#1e4b81"/><rect x="3" y="9.9" width="3" height="1.2" fill="#1e4b81"/><rect x="3" y="12.4" width="3" height="1.2" fill="#1e4b81"/><rect x="3" y="14.6" width="3" height="3.6" fill="#1e4b81"/><path d="M0 18 H9 L4.5 24Z" fill="#1e4b81"/></svg>
<svg class="abs" style="left:1325px;top:604px" width="18" height="21" viewBox="0 0 18 21"><rect x="5.8" y="0.6" width="6" height="2.2" fill="none" stroke="#97aac2" stroke-width="1.2"/><rect x="1" y="2.5" width="16" height="2" fill="#97aac2"/><rect x="2" y="5.6" width="14" height="14.4" fill="#97aac2"/><g fill="#dfe7f1"><rect x="4" y="7.5" width="1.2" height="10.8"/><rect x="7.2" y="7.5" width="1.2" height="10.8"/><rect x="10.4" y="7.5" width="1.2" height="10.8"/><rect x="13.6" y="7.5" width="1.2" height="10.8"/></g></svg>
<div class="abs" style="left:997px;top:633px;width:350px;height:34px;background:#dfe7f1"></div>
<div class="abs" style="left:999px;top:635px;width:235px;height:30px;background:#fff;border:1px solid #a9c6ea;border-radius:4px"></div>
<div class="abs" style="left:1006px;top:635px;white-space:nowrap;line-height:30px;font-size:14px;font-weight:bold;color:#16243b">Brokers</div>
<div class="abs" style="left:1238px;top:635px;width:56px;height:30px;background:#fff;border:1px solid #a9c6ea;border-radius:4px"></div>
<div class="abs" style="left:1245px;top:635px;white-space:nowrap;line-height:30px;font-size:14px;font-weight:bold;color:#16243b">4</div>
<svg class="abs" style="left:1279px;top:642px" width="9" height="17" viewBox="0 0 9 17"><path d="M1.3 3.6 L4.5 0.6 L7.7 3.6Z" fill="#111"/><path d="M1.3 12.6 L4.5 15.6 L7.7 12.6Z" fill="#111"/></svg>
<svg class="abs" style="left:1304px;top:638px" width="9" height="24" viewBox="0 0 9 24"><path d="M4.5 0 L9 6.2 H0Z" fill="#1e4b81"/><rect x="3" y="6" width="3" height="3.3" fill="#1e4b81"/><rect x="3" y="9.9" width="3" height="1.2" fill="#1e4b81"/><rect x="3" y="12.4" width="3" height="1.2" fill="#1e4b81"/><rect x="3" y="14.6" width="3" height="3.6" fill="#1e4b81"/><path d="M0 18 H9 L4.5 24Z" fill="#1e4b81"/></svg>
<svg class="abs" style="left:1325px;top:640px" width="18" height="21" viewBox="0 0 18 21"><rect x="5.8" y="0.6" width="6" height="2.2" fill="none" stroke="#97aac2" stroke-width="1.2"/><rect x="1" y="2.5" width="16" height="2" fill="#97aac2"/><rect x="2" y="5.6" width="14" height="14.4" fill="#97aac2"/><g fill="#dfe7f1"><rect x="4" y="7.5" width="1.2" height="10.8"/><rect x="7.2" y="7.5" width="1.2" height="10.8"/><rect x="10.4" y="7.5" width="1.2" height="10.8"/><rect x="13.6" y="7.5" width="1.2" height="10.8"/></g></svg>
<div class="abs" style="left:997px;top:669px;width:350px;height:34px;background:#dfe7f1"></div>
<div class="abs" style="left:999px;top:671px;width:235px;height:30px;background:#fff;border:1px solid #a9c6ea;border-radius:4px"></div>
<div class="abs" style="left:1006px;top:671px;white-space:nowrap;line-height:30px;font-size:14px;font-weight:bold;color:#16243b">Chemical</div>
<div class="abs" style="left:1238px;top:671px;width:56px;height:30px;background:#fff;border:1px solid #a9c6ea;border-radius:4px"></div>
<div class="abs" style="left:1245px;top:671px;white-space:nowrap;line-height:30px;font-size:14px;font-weight:bold;color:#16243b">5</div>
<svg class="abs" style="left:1279px;top:678px" width="9" height="17" viewBox="0 0 9 17"><path d="M1.3 3.6 L4.5 0.6 L7.7 3.6Z" fill="#111"/><path d="M1.3 12.6 L4.5 15.6 L7.7 12.6Z" fill="#111"/></svg>
<svg class="abs" style="left:1304px;top:674px" width="9" height="24" viewBox="0 0 9 24"><path d="M4.5 0 L9 6.2 H0Z" fill="#1e4b81"/><rect x="3" y="6" width="3" height="3.3" fill="#1e4b81"/><rect x="3" y="9.9" width="3" height="1.2" fill="#1e4b81"/><rect x="3" y="12.4" width="3" height="1.2" fill="#1e4b81"/><rect x="3" y="14.6" width="3" height="3.6" fill="#1e4b81"/><path d="M0 18 H9 L4.5 24Z" fill="#1e4b81"/></svg>
<svg class="abs" style="left:1325px;top:676px" width="18" height="21" viewBox="0 0 18 21"><rect x="5.8" y="0.6" width="6" height="2.2" fill="none" stroke="#97aac2" stroke-width="1.2"/><rect x="1" y="2.5" width="16" height="2" fill="#97aac2"/><rect x="2" y="5.6" width="14" height="14.4" fill="#97aac2"/><g fill="#dfe7f1"><rect x="4" y="7.5" width="1.2" height="10.8"/><rect x="7.2" y="7.5" width="1.2" height="10.8"/><rect x="10.4" y="7.5" width="1.2" height="10.8"/><rect x="13.6" y="7.5" width="1.2" height="10.8"/></g></svg>
<div class="abs" style="left:997px;top:705px;width:350px;height:34px;background:#dfe7f1"></div>
<div class="abs" style="left:999px;top:707px;width:235px;height:30px;background:#fff;border:1px solid #a9c6ea;border-radius:4px"></div>
<div class="abs" style="left:1006px;top:707px;white-space:nowrap;line-height:30px;font-size:14px;font-weight:bold;color:#16243b">Business Services</div>
<div class="abs" style="left:1238px;top:707px;width:56px;height:30px;background:#fff;border:1px solid #a9c6ea;border-radius:4px"></div>
<div class="abs" style="left:1245px;top:707px;white-space:nowrap;line-height:30px;font-size:14px;font-weight:bold;color:#16243b">6</div>
<svg class="abs" style="left:1279px;top:714px" width="9" height="17" viewBox="0 0 9 17"><path d="M1.3 3.6 L4.5 0.6 L7.7 3.6Z" fill="#111"/><path d="M1.3 12.6 L4.5 15.6 L7.7 12.6Z" fill="#111"/></svg>
<svg class="abs" style="left:1304px;top:710px" width="9" height="24" viewBox="0 0 9 24"><path d="M4.5 0 L9 6.2 H0Z" fill="#1e4b81"/><rect x="3" y="6" width="3" height="3.3" fill="#1e4b81"/><rect x="3" y="9.9" width="3" height="1.2" fill="#1e4b81"/><rect x="3" y="12.4" width="3" height="1.2" fill="#1e4b81"/><rect x="3" y="14.6" width="3" height="3.6" fill="#1e4b81"/><path d="M0 18 H9 L4.5 24Z" fill="#1e4b81"/></svg>
<svg class="abs" style="left:1325px;top:712px" width="18" height="21" viewBox="0 0 18 21"><rect x="5.8" y="0.6" width="6" height="2.2" fill="none" stroke="#97aac2" stroke-width="1.2"/><rect x="1" y="2.5" width="16" height="2" fill="#97aac2"/><rect x="2" y="5.6" width="14" height="14.4" fill="#97aac2"/><g fill="#dfe7f1"><rect x="4" y="7.5" width="1.2" height="10.8"/><rect x="7.2" y="7.5" width="1.2" height="10.8"/><rect x="10.4" y="7.5" width="1.2" height="10.8"/><rect x="13.6" y="7.5" width="1.2" height="10.8"/></g></svg>
<div class="abs" style="left:997px;top:741px;width:350px;height:34px;background:#dfe7f1"></div>
<div class="abs" style="left:999px;top:743px;width:235px;height:30px;background:#fff;border:1px solid #a9c6ea;border-radius:4px"></div>
<div class="abs" style="left:1006px;top:743px;white-space:nowrap;line-height:30px;font-size:14px;font-weight:bold;color:#16243b">Consulting</div>
<div class="abs" style="left:1238px;top:743px;width:56px;height:30px;background:#fff;border:1px solid #a9c6ea;border-radius:4px"></div>
<div class="abs" style="left:1245px;top:743px;white-space:nowrap;line-height:30px;font-size:14px;font-weight:bold;color:#16243b">7</div>
<svg class="abs" style="left:1279px;top:750px" width="9" height="17" viewBox="0 0 9 17"><path d="M1.3 3.6 L4.5 0.6 L7.7 3.6Z" fill="#111"/><path d="M1.3 12.6 L4.5 15.6 L7.7 12.6Z" fill="#111"/></svg>
<svg class="abs" style="left:1304px;top:746px" width="9" height="24" viewBox="0 0 9 24"><path d="M4.5 0 L9 6.2 H0Z" fill="#1e4b81"/><rect x="3" y="6" width="3" height="3.3" fill="#1e4b81"/><rect x="3" y="9.9" width="3" height="1.2" fill="#1e4b81"/><rect x="3" y="12.4" width="3" height="1.2" fill="#1e4b81"/><rect x="3" y="14.6" width="3" height="3.6" fill="#1e4b81"/><path d="M0 18 H9 L4.5 24Z" fill="#1e4b81"/></svg>
<svg class="abs" style="left:1325px;top:748px" width="18" height="21" viewBox="0 0 18 21"><rect x="5.8" y="0.6" width="6" height="2.2" fill="none" stroke="#97aac2" stroke-width="1.2"/><rect x="1" y="2.5" width="16" height="2" fill="#97aac2"/><rect x="2" y="5.6" width="14" height="14.4" fill="#97aac2"/><g fill="#dfe7f1"><rect x="4" y="7.5" width="1.2" height="10.8"/><rect x="7.2" y="7.5" width="1.2" height="10.8"/><rect x="10.4" y="7.5" width="1.2" height="10.8"/><rect x="13.6" y="7.5" width="1.2" height="10.8"/></g></svg>
<div class="abs" style="left:997px;top:777px;width:350px;height:34px;background:#dfe7f1"></div>
<div class="abs" style="left:999px;top:779px;width:235px;height:30px;background:#fff;border:1px solid #a9c6ea;border-radius:4px"></div>
<div class="abs" style="left:1006px;top:779px;white-space:nowrap;line-height:30px;font-size:14px;font-weight:bold;color:#16243b">Construction</div>
<div class="abs" style="left:1238px;top:779px;width:56px;height:30px;background:#fff;border:1px solid #a9c6ea;border-radius:4px"></div>
<div class="abs" style="left:1245px;top:779px;white-space:nowrap;line-height:30px;font-size:14px;font-weight:bold;color:#16243b">8</div>
<svg class="abs" style="left:1279px;top:786px" width="9" height="17" viewBox="0 0 9 17"><path d="M1.3 3.6 L4.5 0.6 L7.7 3.6Z" fill="#111"/><path d="M1.3 12.6 L4.5 15.6 L7.7 12.6Z" fill="#111"/></svg>
<svg class="abs" style="left:1304px;top:782px" width="9" height="24" viewBox="0 0 9 24"><path d="M4.5 0 L9 6.2 H0Z" fill="#1e4b81"/><rect x="3" y="6" width="3" height="3.3" fill="#1e4b81"/><rect x="3" y="9.9" width="3" height="1.2" fill="#1e4b81"/><rect x="3" y="12.4" width="3" height="1.2" fill="#1e4b81"/><rect x="3" y="14.6" width="3" height="3.6" fill="#1e4b81"/><path d="M0 18 H9 L4.5 24Z" fill="#1e4b81"/></svg>
<svg class="abs" style="left:1325px;top:784px" width="18" height="21" viewBox="0 0 18 21"><rect x="5.8" y="0.6" width="6" height="2.2" fill="none" stroke="#97aac2" stroke-width="1.2"/><rect x="1" y="2.5" width="16" height="2" fill="#97aac2"/><rect x="2" y="5.6" width="14" height="14.4" fill="#97aac2"/><g fill="#dfe7f1"><rect x="4" y="7.5" width="1.2" height="10.8"/><rect x="7.2" y="7.5" width="1.2" height="10.8"/><rect x="10.4" y="7.5" width="1.2" height="10.8"/><rect x="13.6" y="7.5" width="1.2" height="10.8"/></g></svg>
<div class="abs" style="left:980px;top:780px;width:420px;height:20px;background:#2b5281"></div>
<svg class="abs" style="left:478px;top:162px" width="14" height="21" viewBox="0 0 14 21"><path d="M1.5 1.3 L1.5 17.3 L5.3 13.6 L8 19.6 L10.3 18.6 L7.7 12.8 L12.8 12.8Z" fill="#fff" stroke="#111" stroke-width="1.1" stroke-linejoin="round"/></svg>
</body></html>
